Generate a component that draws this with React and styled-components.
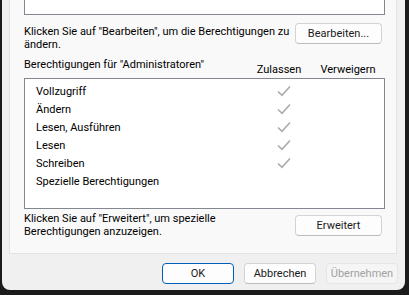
import React from 'react';
import styled, { createGlobalStyle } from 'styled-components';

const GlobalStyle = createGlobalStyle`
  html, body {
    margin: 0;
    padding: 0;
    background: #1b1b1b;
  }
  body {
    font-family: "Roboto", "Liberation Sans", sans-serif;
    font-size: 11px;
    color: #000;
  }
`;

const Window = styled.div`
  width: 403px;
  height: 290px;
  margin-left: 2px;
  background: #f0f0f0;
  border-radius: 0 0 8px 8px;
  display: flex;
  flex-direction: column;
  box-sizing: border-box;
`;

const TabPage = styled.div`
  margin-left: 7px;
  width: 388px;
  height: 254px;
  box-sizing: border-box;
  background: #f9f9f9;
  border: 1px solid #e3e3e3;
  border-top: none;
  padding: 0 11px 0 14px;
  display: flex;
  flex-direction: column;
`;

const ListBox = styled.div`
  width: 361px;
  box-sizing: border-box;
  background: #fff;
  border: 1px solid #828790;
  ${p => p.$cut && 'border-top: none;'}
  height: ${p => p.$h}px;
  margin-top: ${p => p.$top || 0}px;
  padding-top: 3px;
`;

const InfoRow = styled.div`
  display: flex;
  justify-content: space-between;
  align-items: flex-start;
  width: 358px;
  margin-top: ${p => p.$top}px;
`;

const InfoText = styled.div`
  line-height: 13px;
  padding-top: ${p => p.$pad || 0}px;
`;

const Button = styled.button`
  font-family: inherit;
  font-size: 11px;
  width: ${p => p.$w || 72}px;
  height: ${p => p.$h || 21}px;
  margin-top: ${p => p.$top || 0}px;
  box-sizing: border-box;
  border-radius: 4px;
  background: ${p => (p.disabled ? '#f5f5f5' : '#fdfdfd')};
  color: ${p => (p.disabled ? '#a2a2a2' : '#1a1a1a')};
  border: 1px solid ${p => (p.$primary ? '#005fb8' : p.disabled ? '#e6e6e6' : '#d3d3d3')};
  border-bottom-color: ${p => (p.$primary ? '#005fb8' : p.disabled ? '#e6e6e6' : '#bcbcbc')};
  padding: 0;
  flex-shrink: 0;
`;

const HeaderRow = styled.div`
  display: flex;
  align-items: flex-end;
  width: 361px;
  margin-top: 7px;
`;

const GroupLabel = styled.div`
  flex: 1;
  margin-bottom: 5px;
`;

const ColHead = styled.div`
  width: ${p => p.$w}px;
  text-align: center;
`;

const PermRow = styled.div`
  display: flex;
  align-items: center;
  height: 18px;
  padding-left: 11px;
`;

const PermName = styled.div`
  width: 241px;
`;

const CheckCell = styled.div`
  width: 14px;
  height: 12px;
  display: flex;
`;

const Footer = styled.div`
  display: flex;
  justify-content: flex-end;
  gap: 10px;
  padding: 9px 7px 0 0;
`;

const Check = () => (
  <svg width="14" height="12" viewBox="0 0 14 12">
    <polyline points="1,6.5 5,10.3 13,1.5" fill="none" stroke="#ababab" strokeWidth="1.6" />
  </svg>
);

const perms = [
  { name: 'Vollzugriff', allow: true },
  { name: 'Ändern', allow: true },
  { name: 'Lesen, Ausführen', allow: true },
  { name: 'Lesen', allow: true },
  { name: 'Schreiben', allow: true },
  { name: 'Spezielle Berechtigungen', allow: false },
];

export default function App() {
  return (
    <>
      <GlobalStyle />
      <Window>
        <TabPage>
          <ListBox $cut $h={15} />
          <InfoRow $top={8}>
            <InfoText $pad={2}>
              Klicken Sie auf "Bearbeiten", um die Berechtigungen zu<br />ändern.
            </InfoText>
            <Button $w={87}>Bearbeiten...</Button>
          </InfoRow>
          <HeaderRow>
            <GroupLabel>Berechtigungen für "Administratoren"</GroupLabel>
            <ColHead $w={64}>Zulassen</ColHead>
            <ColHead $w={74}>Verweigern</ColHead>
          </HeaderRow>
          <ListBox $h={131} $top={2}>
            {perms.map(p => (
              <PermRow key={p.name}>
                <PermName>{p.name}</PermName>
                <CheckCell>{p.allow && <Check />}</CheckCell>
              </PermRow>
            ))}
          </ListBox>
          <InfoRow $top={3}>
            <InfoText>
              Klicken Sie auf "Erweitert", um spezielle<br />Berechtigungen anzuzeigen.
            </InfoText>
            <Button $w={87} $top={3}>Erweitert</Button>
          </InfoRow>
        </TabPage>
        <Footer>
          <Button $primary>OK</Button>
          <Button>Abbrechen</Button>
          <Button disabled>Übernehmen</Button>
        </Footer>
      </Window>
    </>
  );
}
